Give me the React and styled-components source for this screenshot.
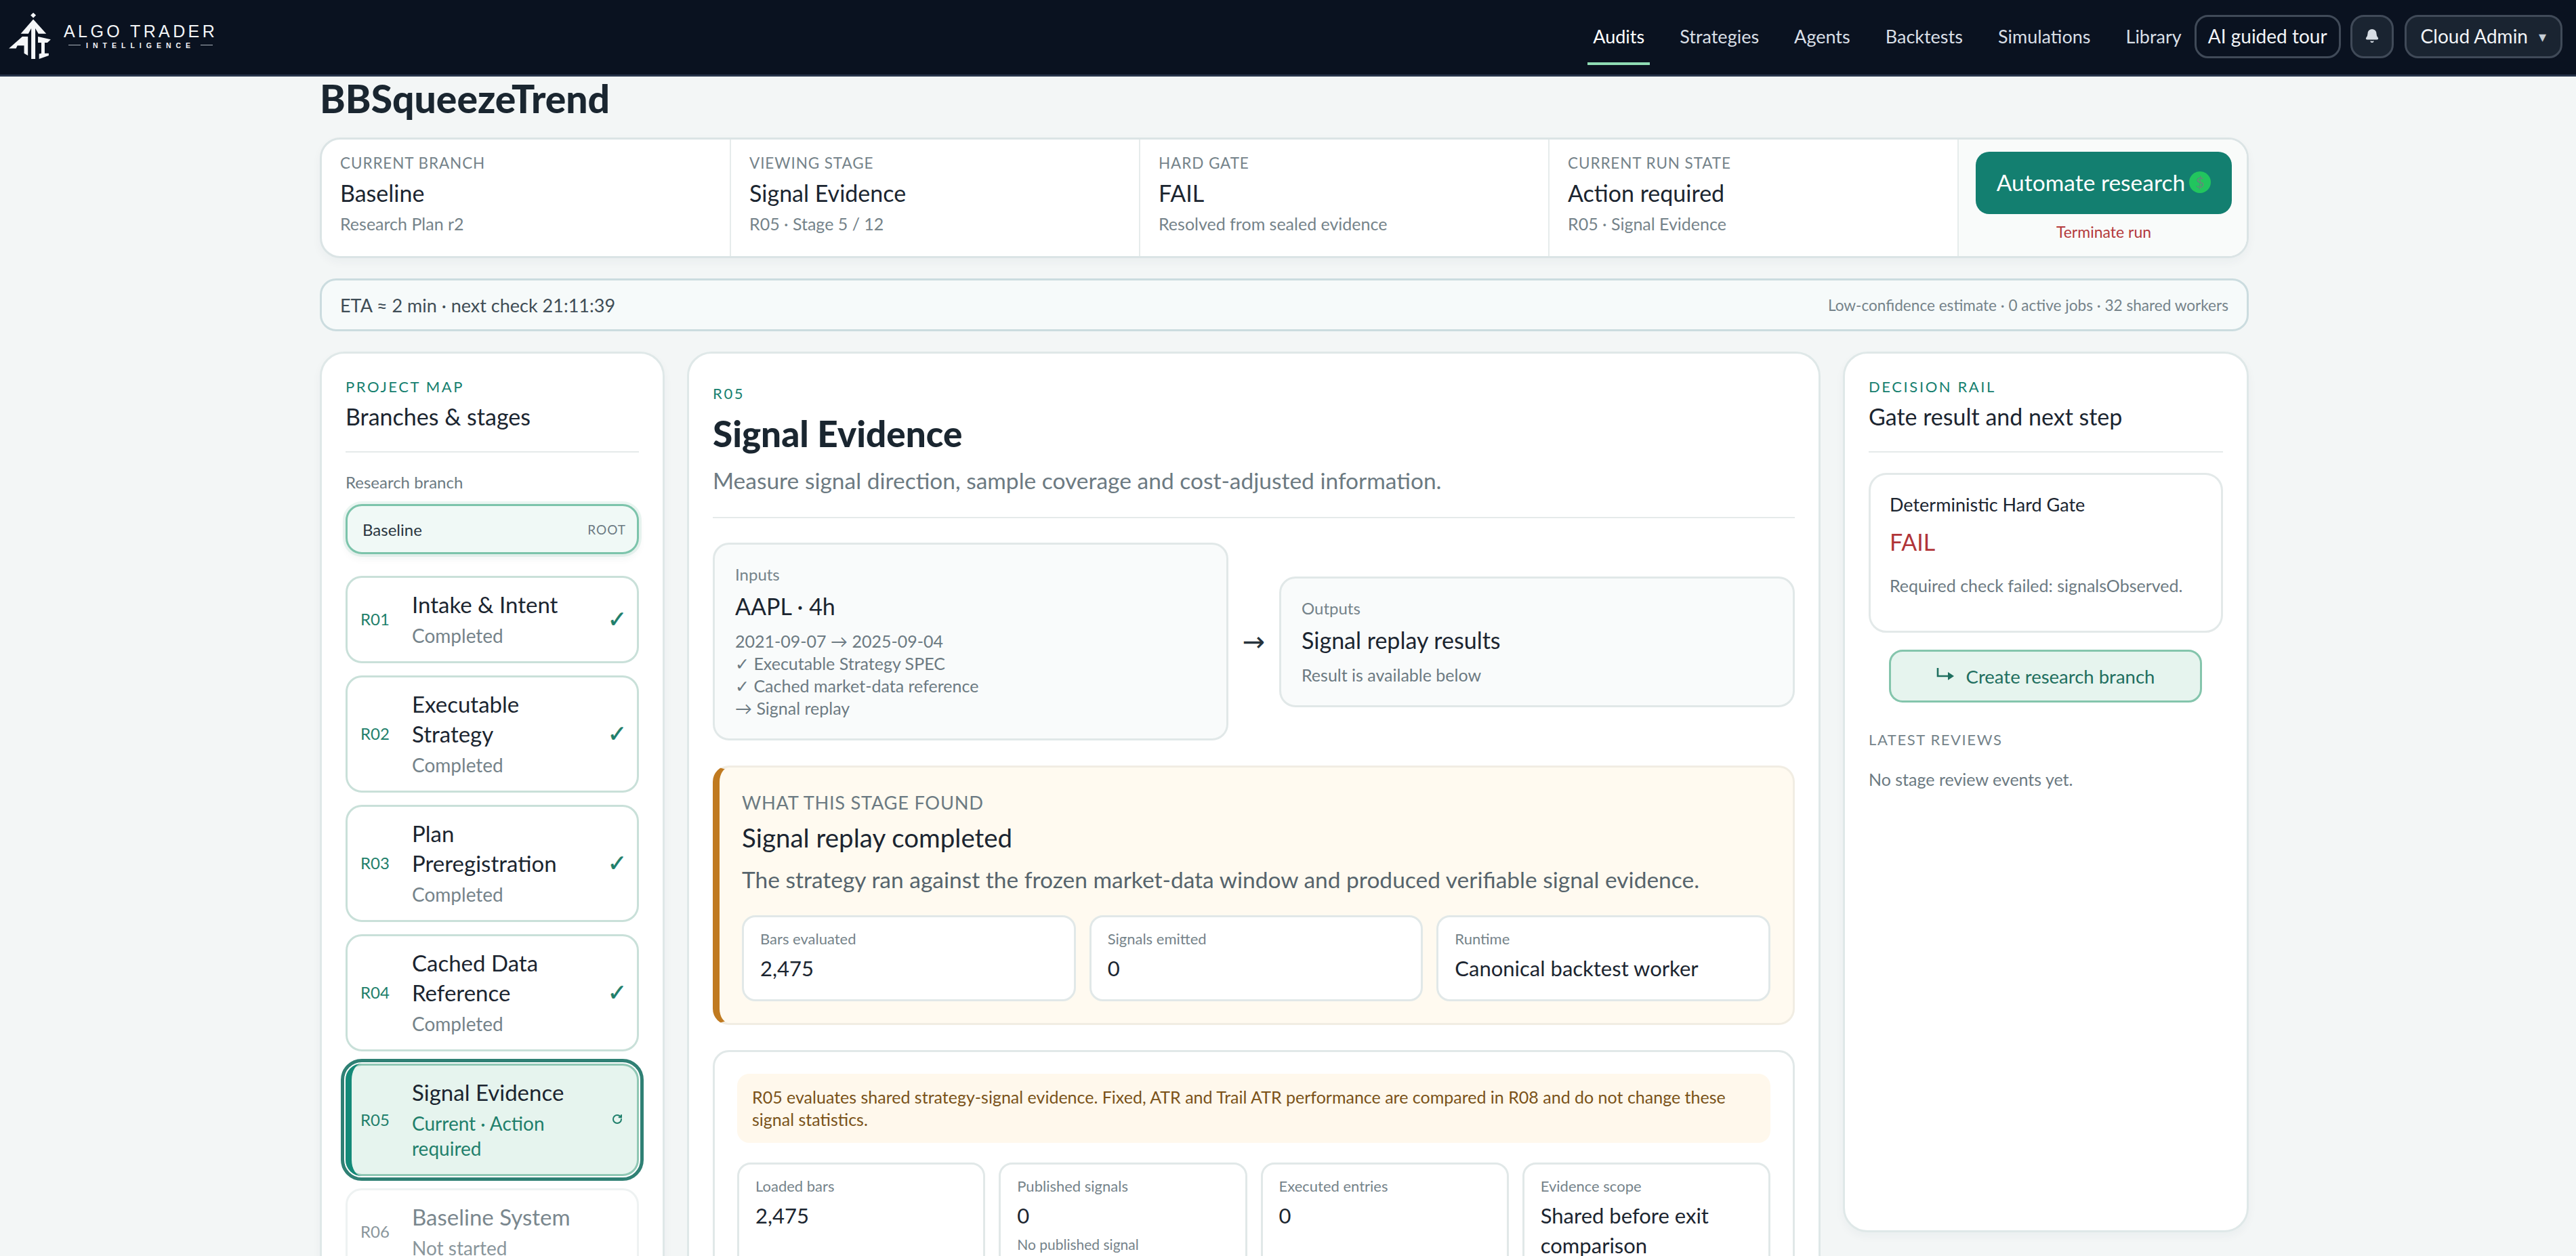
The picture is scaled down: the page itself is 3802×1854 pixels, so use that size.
import React from 'react';
import styled, { createGlobalStyle } from 'styled-components';
import { Bell, RotateCw } from 'lucide-react';

const GlobalStyle = createGlobalStyle`
  html, body {
    margin: 0;
    height: 100%;
    overflow: hidden;
    background: #f3f6f6;
  }
  * {
    box-sizing: border-box;
  }
  body {
    font-family: Lato, "Open Sans", sans-serif;
    color: #1b2530;
  }
`;

const Page = styled.div`
  height: 1854px;
  overflow: hidden;
  display: flex;
  flex-direction: column;
`;

const Header = styled.header`
  flex: none;
  height: 113px;
  background: #0a1220;
  border-bottom: 3px solid #27344a;
  display: flex;
  align-items: center;
  justify-content: space-between;
  padding: 0 20px 0 13px;
`;

const Brand = styled.div`
  display: flex;
  align-items: center;
  gap: 19px;
  margin-top: -5px;
`;

const BrandText = styled.div`
  display: flex;
  flex-direction: column;
  align-items: center;
  color: #f4f6f8;
`;

const BrandName = styled.div`
  font-family: "Liberation Sans", sans-serif;
  font-size: 25px;
  line-height: 28px;
  letter-spacing: 4.4px;
  white-space: nowrap;
`;

const BrandSub = styled.div`
  display: flex;
  align-items: center;
  gap: 8px;
  font-family: "Liberation Sans", sans-serif;
  font-weight: 700;
  font-size: 10.5px;
  line-height: 14px;
  letter-spacing: 7px;
  &::before,
  &::after {
    content: '';
    width: 18px;
    height: 1px;
    background: #aab2bb;
  }
`;

const Nav = styled.nav`
  display: flex;
  align-items: center;
  margin-top: -2px;
`;

const NavLinks = styled.div`
  display: flex;
  gap: 52px;
  margin-right: 19px;
`;

const NavLink = styled.a`
  position: relative;
  font-size: 27px;
  line-height: 36px;
  color: ${(p) => (p.$active ? '#ffffff' : '#d9dfe6')};
  &::after {
    content: '';
    display: ${(p) => (p.$active ? 'block' : 'none')};
    position: absolute;
    left: -8px;
    right: -8px;
    bottom: -24px;
    height: 4px;
    background: #8fdcb4;
  }
`;

const NavButton = styled.button`
  height: 64px;
  margin-left: ${(p) => p.$gap || 0}px;
  padding: 0 ${(p) => p.$pad || 17}px 2px;
  display: flex;
  align-items: center;
  gap: 16px;
  border: 3px solid #404a58;
  border-radius: 20px;
  background: ${(p) => (p.$filled ? '#1a2431' : 'transparent')};
  color: #f2f4f7;
  font-family: inherit;
  font-size: 28px;
`;

const Caret = styled.span`
  font-size: 22px;
  color: #c7ced6;
`;

const Main = styled.main`
  flex: 1;
  min-height: 0;
  padding: 0 483px 0 472px;
`;

const Title = styled.h1`
  margin: 0;
  height: 90px;
  font-size: 57px;
  line-height: 64px;
  font-weight: 900;
  color: #1a2630;
`;

const Summary = styled.section`
  display: grid;
  grid-template-columns: repeat(4, 604px) 1fr;
  height: 178px;
  background: #ffffff;
  border: 3px solid #dbe4e5;
  border-radius: 30px;
  overflow: hidden;
  box-shadow: 0 6px 14px rgba(30, 60, 70, 0.04);
`;

const SummaryCell = styled.div`
  padding: 20px 27px;
  border-right: 2px solid #e6ecec;
`;

const SummaryLabel = styled.div`
  font-size: 22.5px;
  line-height: 30px;
  letter-spacing: 0.9px;
  color: #75838a;
`;

const SummaryValue = styled.div`
  margin-top: 7px;
  font-size: 34px;
  line-height: 44px;
  color: #1b2530;
`;

const SummarySub = styled.div`
  margin-top: 7px;
  font-size: 25px;
  line-height: 32px;
  color: #75838a;
`;

const AutomateCell = styled.div`
  background: #f9fbfa;
  padding: 18px 22px 0 25px;
  display: flex;
  flex-direction: column;
  align-items: stretch;
`;

const AutomateButton = styled.button`
  height: 92px;
  padding: 0 0 3px;
  border: none;
  border-radius: 20px;
  background: #137f70;
  color: #ffffff;
  font-family: inherit;
  font-size: 33.5px;
  display: flex;
  align-items: center;
  justify-content: center;
  gap: 6px;
`;

const DollarDot = styled.span`
  width: 32px;
  height: 32px;
  border-radius: 50%;
  background: #22c55e;
  color: #5d8f78;
  font-size: 22px;
  line-height: 32px;
  text-align: center;
`;

const TerminateLink = styled.a`
  margin-top: 11px;
  text-align: center;
  font-size: 23px;
  line-height: 30px;
  color: #b43a3c;
`;

const EtaBar = styled.section`
  margin-top: 30px;
  height: 78px;
  padding: 0 27px;
  display: flex;
  align-items: center;
  justify-content: space-between;
  background: #f6fafa;
  border: 3px solid #cbdcdf;
  border-radius: 24px;
`;

const EtaText = styled.span`
  font-size: 27px;
  color: #3f4d56;
`;

const EtaMeta = styled.span`
  font-size: 22.6px;
  color: #75838a;
`;

const Columns = styled.div`
  margin-top: 30px;
  display: grid;
  grid-template-columns: 509px 1673px 1fr;
  gap: 33px;
  align-items: start;
`;

const Panel = styled.aside`
  background: #ffffff;
  border: 3px solid #dfe8e8;
  border-radius: 36px;
  padding: 34px 35px;
  height: ${(p) => p.$height || 'auto'};
  box-shadow: 0 6px 14px rgba(30, 60, 70, 0.04);
`;

const Eyebrow = styled.div`
  font-size: 22px;
  line-height: 30px;
  letter-spacing: 2.6px;
  color: #16806f;
`;

const PanelTitle = styled.h2`
  margin: 6px 0 0;
  font-size: 34px;
  line-height: 46px;
  font-weight: 400;
  color: #1b2530;
`;

const Rule = styled.hr`
  margin: ${(p) => p.$margin || '28px 0'};
  border: none;
  height: 2px;
  background: #e5eaea;
`;

const FieldLabel = styled.div`
  font-size: 24px;
  line-height: 32px;
  color: #6c7a82;
`;

const BranchSelect = styled.div`
  margin-top: 16px;
  height: 74px;
  padding: 0 16px 0 22px;
  display: flex;
  align-items: center;
  justify-content: space-between;
  background: #f0f9f6;
  border: 3px solid #7cc4ab;
  border-radius: 24px;
  box-shadow: 0 0 0 4px rgba(124, 196, 171, 0.15), 0 6px 12px rgba(30, 60, 70, 0.06);
  font-size: 24px;
  color: #2a3640;
`;

const RootTag = styled.span`
  font-size: 19px;
  letter-spacing: 1px;
  color: #6c7a82;
`;

const StageList = styled.div`
  margin-top: 32px;
  display: flex;
  flex-direction: column;
  gap: 18px;
`;

const StageCard = styled.div`
  position: relative;
  display: grid;
  grid-template-columns: 76px 1fr 34px;
  align-items: center;
  padding: 17px 12px 19px 19px;
  border: 3px solid ${(p) => (p.$current ? '#8fc7b4' : p.$faded ? '#eef2f2' : '#c9e0d9')};
  border-radius: 24px;
  background: ${(p) => (p.$current ? '#e6f4ee' : '#ffffff')};
  outline: ${(p) => (p.$current ? '5px solid #2f8074' : 'none')};
  outline-offset: 2px;
`;

const StageBar = styled.span`
  position: absolute;
  inset: -3px;
  border-left: 9px solid #148a78;
  border-radius: 24px;
`;

const StageCode = styled.span`
  font-size: 24px;
  color: ${(p) => (p.$faded ? '#8a969c' : '#1f7f6b')};
`;

const StageBody = styled.div`
  max-width: 262px;
`;

const StageName = styled.div`
  font-size: 33px;
  line-height: 44px;
  color: ${(p) => (p.$faded ? '#7a878e' : '#1b2530')};
`;

const StageStatus = styled.div`
  margin-top: 6px;
  font-size: 28px;
  line-height: 37px;
  color: ${(p) => (p.$current ? '#1f7f6b' : p.$faded ? '#8a969c' : '#75838a')};
`;

const StageMark = styled.span`
  justify-self: center;
  display: flex;
  font-family: "DejaVu Sans", sans-serif;
  font-size: 34px;
  font-weight: 700;
  color: #1f7f6b;
  -webkit-text-stroke: 0.6px #1f7f6b;
`;

const CenterPanel = styled.article`
  background: #ffffff;
  border: 3px solid #dfe8e8;
  border-radius: 36px;
  padding: 44px 35px;
`;

const StageTitle = styled.h2`
  margin: 12px 0 0;
  font-size: 53px;
  line-height: 64px;
  font-weight: 900;
  color: #1a2630;
`;

const StageIntro = styled.p`
  margin: 15px 0 0;
  font-size: 33.5px;
  line-height: 44px;
  color: #6c7a82;
`;

const FlowRow = styled.div`
  display: grid;
  grid-template-columns: 1fr 75px 1fr;
  align-items: center;
`;

const FlowArrow = styled.span`
  justify-self: center;
  font-family: "DejaVu Sans", sans-serif;
  font-size: 40px;
  color: #27333c;
`;

const FlowBox = styled.div`
  padding: 28px 30px;
  background: #f9fbfb;
  border: 3px solid #e1e8e8;
  border-radius: 24px;
`;

const FlowLabel = styled.div`
  font-size: 24px;
  line-height: 32px;
  color: #75838a;
`;

const FlowValue = styled.div`
  margin-top: 8px;
  font-size: 34px;
  line-height: 46px;
  color: #1b2530;
`;

const FlowNotes = styled.div`
  margin-top: 12px;
  font-size: 25px;
  line-height: 33px;
  color: #6c7a82;
`;

const Finding = styled.section`
  margin-top: 37px;
  padding: 34px 33px 32px 33px;
  background: #fffaf0;
  border: 3px solid #f1ede3;
  border-left: 10px solid #c07a20;
  border-radius: 24px;
`;

const FindingLabel = styled.div`
  font-size: 27.3px;
  line-height: 36px;
  letter-spacing: 0.7px;
  color: #6c7a82;
`;

const FindingTitle = styled.div`
  margin-top: 8px;
  font-size: 38.5px;
  line-height: 50px;
  color: #1b2530;
`;

const FindingText = styled.p`
  margin: 15px 0 0;
  font-size: 33.5px;
  line-height: 44px;
  color: #56646c;
`;

const MetricRow = styled.div`
  display: grid;
  grid-template-columns: repeat(${(p) => p.$cols}, 1fr);
  gap: 20px;
  margin-top: ${(p) => p.$top || 0}px;
`;

const Metric = styled.div`
  min-height: 127px;
  padding: 17px 24px;
  background: #ffffff;
  border: 3px solid #e1e8e8;
  border-radius: 20px;
`;

const MetricLabel = styled.div`
  font-size: 22px;
  line-height: 30px;
  color: #75838a;
`;

const MetricValue = styled.div`
  margin-top: 6px;
  font-size: 31px;
  line-height: 44px;
  color: #1b2530;
`;

const MetricNote = styled.div`
  margin-top: 6px;
  font-size: 21px;
  line-height: 30px;
  color: #75838a;
`;

const EvidenceCard = styled.section`
  margin-top: 37px;
  padding: 32px 33px;
  background: #ffffff;
  border: 3px solid #e1e8e8;
  border-radius: 24px;
`;

const Notice = styled.div`
  padding: 18px 22px;
  background: #fff8ec;
  border-radius: 18px;
  font-size: 25px;
  line-height: 33px;
  color: #7a5218;
`;

const GateCard = styled.div`
  margin-top: 30px;
  height: 236px;
  padding: 26px 28px;
  border: 3px solid #e3e9e9;
  border-radius: 26px;
`;

const GateTitle = styled.div`
  font-size: 27px;
  line-height: 36px;
  color: #1b2530;
`;

const GateResult = styled.div`
  margin-top: 14px;
  font-size: 34px;
  line-height: 46px;
  color: #b03438;
`;

const GateNote = styled.div`
  margin-top: 24px;
  font-size: 25px;
  line-height: 34px;
  color: #6c7a82;
`;

const BranchButton = styled.button`
  display: flex;
  align-items: center;
  justify-content: center;
  gap: 18px;
  width: 462px;
  height: 78px;
  margin: 25px 0 0 30px;
  background: #e6f4ee;
  border: 3px solid #84c5ac;
  border-radius: 20px;
  font-family: inherit;
  font-size: 27.5px;
  color: #1f6f5f;
`;

const SectionLabel = styled.div`
  margin-top: 40px;
  font-size: 22px;
  line-height: 30px;
  letter-spacing: 1.6px;
  color: #75838a;
`;

const EmptyText = styled.div`
  margin-top: 26px;
  font-size: 25px;
  line-height: 34px;
  color: #6c7a82;
`;

function LogoMark() {
  return (
    <svg width="62" height="70" viewBox="40 56 187 212" fill="#f4f6f8">
      <polygon points="149,58 161,70 149,82 137,70" />
      <polygon points="149,88 207,152 172,152 158,128 158,265 140,265 140,128 127,152 93,152" />
      <polygon points="40,218 100,165 125,165 125,250 108,240 108,205 78,205 72,218" />
      <polygon points="170,165 227,178 212,192 200,192 200,240 218,240 218,250 175,265 175,242 185,240 185,192 170,192" />
    </svg>
  );
}

function BranchIcon() {
  return (
    <svg width="26" height="20" viewBox="0 0 26 20" style={{ marginTop: -6 }}>
      <path d="M2 1v12h17" fill="none" stroke="#1f6f5f" strokeWidth="2.6" />
      <polygon points="17,7 26,13 17,19" fill="#1f6f5f" />
    </svg>
  );
}

const stages = [
  { code: 'R01', name: 'Intake & Intent', status: 'Completed' },
  { code: 'R02', name: 'Executable Strategy', status: 'Completed' },
  { code: 'R03', name: 'Plan Preregistration', status: 'Completed' },
  { code: 'R04', name: 'Cached Data Reference', status: 'Completed' },
  { code: 'R05', name: 'Signal Evidence', status: 'Current · Action required', current: true },
  { code: 'R06', name: 'Baseline System', status: 'Not started', faded: true },
];

const summary = [
  { label: 'CURRENT BRANCH', value: 'Baseline', sub: 'Research Plan r2' },
  { label: 'VIEWING STAGE', value: 'Signal Evidence', sub: 'R05 · Stage 5 / 12' },
  { label: 'HARD GATE', value: 'FAIL', sub: 'Resolved from sealed evidence' },
  { label: 'CURRENT RUN STATE', value: 'Action required', sub: 'R05 · Signal Evidence' },
];

export default function App() {
  return (
    <Page>
      <GlobalStyle />
      <Header>
        <Brand>
          <LogoMark />
          <BrandText>
            <BrandName>ALGO TRADER</BrandName>
            <BrandSub>INTELLIGENCE</BrandSub>
          </BrandText>
        </Brand>
        <Nav>
          <NavLinks>
            <NavLink $active>Audits</NavLink>
            <NavLink>Strategies</NavLink>
            <NavLink>Agents</NavLink>
            <NavLink>Backtests</NavLink>
            <NavLink>Simulations</NavLink>
            <NavLink>Library</NavLink>
          </NavLinks>
          <NavButton>AI guided tour</NavButton>
          <NavButton $filled $gap={14} $pad={18} aria-label="Notifications">
            <Bell size={22} fill="#d7dde4" color="#d7dde4" />
          </NavButton>
          <NavButton $filled $gap={16} $pad={21}>
            Cloud Admin
            <Caret>▾</Caret>
          </NavButton>
        </Nav>
      </Header>
      <Main>
        <Title>BBSqueezeTrend</Title>
        <Summary>
          {summary.map((s) => (
            <SummaryCell key={s.label}>
              <SummaryLabel>{s.label}</SummaryLabel>
              <SummaryValue>{s.value}</SummaryValue>
              <SummarySub>{s.sub}</SummarySub>
            </SummaryCell>
          ))}
          <AutomateCell>
            <AutomateButton>
              Automate research
              <DollarDot>$</DollarDot>
            </AutomateButton>
            <TerminateLink>Terminate run</TerminateLink>
          </AutomateCell>
        </Summary>
        <EtaBar>
          <EtaText>ETA ≈ 2 min · next check 21:11:39</EtaText>
          <EtaMeta>Low-confidence estimate · 0 active jobs · 32 shared workers</EtaMeta>
        </EtaBar>
        <Columns>
          <Panel>
            <Eyebrow>PROJECT MAP</Eyebrow>
            <PanelTitle>Branches &amp; stages</PanelTitle>
            <Rule />
            <FieldLabel>Research branch</FieldLabel>
            <BranchSelect>
              Baseline
              <RootTag>ROOT</RootTag>
            </BranchSelect>
            <StageList>
              {stages.map((s) => (
                <StageCard key={s.code} $current={s.current} $faded={s.faded}>
                  {s.current && <StageBar />}
                  <StageCode $faded={s.faded}>{s.code}</StageCode>
                  <StageBody>
                    <StageName $faded={s.faded}>{s.name}</StageName>
                    <StageStatus $current={s.current} $faded={s.faded}>
                      {s.status}
                    </StageStatus>
                  </StageBody>
                  <StageMark>
                    {s.current ? <RotateCw size={16} strokeWidth={3} /> : s.faded ? '' : '✓'}
                  </StageMark>
                </StageCard>
              ))}
            </StageList>
          </Panel>
          <CenterPanel>
            <Eyebrow>R05</Eyebrow>
            <StageTitle>Signal Evidence</StageTitle>
            <StageIntro>Measure signal direction, sample coverage and cost-adjusted information.</StageIntro>
            <Rule $margin="32px 0 36px" />
            <FlowRow>
              <FlowBox>
                <FlowLabel>Inputs</FlowLabel>
                <FlowValue>AAPL · 4h</FlowValue>
                <FlowNotes>
                  2021-09-07 → 2025-09-04
                  <br />✓ Executable Strategy SPEC
                  <br />✓ Cached market-data reference
                  <br />→ Signal replay
                </FlowNotes>
              </FlowBox>
              <FlowArrow>→</FlowArrow>
              <FlowBox>
                <FlowLabel>Outputs</FlowLabel>
                <FlowValue>Signal replay results</FlowValue>
                <FlowNotes>Result is available below</FlowNotes>
              </FlowBox>
            </FlowRow>
            <Finding>
              <FindingLabel>WHAT THIS STAGE FOUND</FindingLabel>
              <FindingTitle>Signal replay completed</FindingTitle>
              <FindingText>
                The strategy ran against the frozen market-data window and produced verifiable signal evidence.
              </FindingText>
              <MetricRow $cols={3} $top={31}>
                <Metric>
                  <MetricLabel>Bars evaluated</MetricLabel>
                  <MetricValue>2,475</MetricValue>
                </Metric>
                <Metric>
                  <MetricLabel>Signals emitted</MetricLabel>
                  <MetricValue>0</MetricValue>
                </Metric>
                <Metric>
                  <MetricLabel>Runtime</MetricLabel>
                  <MetricValue>Canonical backtest worker</MetricValue>
                </Metric>
              </MetricRow>
            </Finding>
            <EvidenceCard>
              <Notice>
                R05 evaluates shared strategy-signal evidence. Fixed, ATR and Trail ATR performance are compared in R08
                and do not change these signal statistics.
              </Notice>
              <MetricRow $cols={4} $top={29}>
                <Metric>
                  <MetricLabel>Loaded bars</MetricLabel>
                  <MetricValue>2,475</MetricValue>
                </Metric>
                <Metric>
                  <MetricLabel>Published signals</MetricLabel>
                  <MetricValue>0</MetricValue>
                  <MetricNote>No published signal</MetricNote>
                </Metric>
                <Metric>
                  <MetricLabel>Executed entries</MetricLabel>
                  <MetricValue>0</MetricValue>
                </Metric>
                <Metric>
                  <MetricLabel>Evidence scope</MetricLabel>
                  <MetricValue>Shared before exit comparison</MetricValue>
                </Metric>
              </MetricRow>
            </EvidenceCard>
          </CenterPanel>
          <Panel $height="1300px">
            <Eyebrow>DECISION RAIL</Eyebrow>
            <PanelTitle>Gate result and next step</PanelTitle>
            <Rule $margin="28px 0 0" />
            <GateCard>
              <GateTitle>Deterministic Hard Gate</GateTitle>
              <GateResult>FAIL</GateResult>
              <GateNote>Required check failed: signalsObserved.</GateNote>
            </GateCard>
            <BranchButton>
              <BranchIcon />
              Create research branch
            </BranchButton>
            <SectionLabel>LATEST REVIEWS</SectionLabel>
            <EmptyText>No stage review events yet.</EmptyText>
          </Panel>
        </Columns>
      </Main>
    </Page>
  );
}
